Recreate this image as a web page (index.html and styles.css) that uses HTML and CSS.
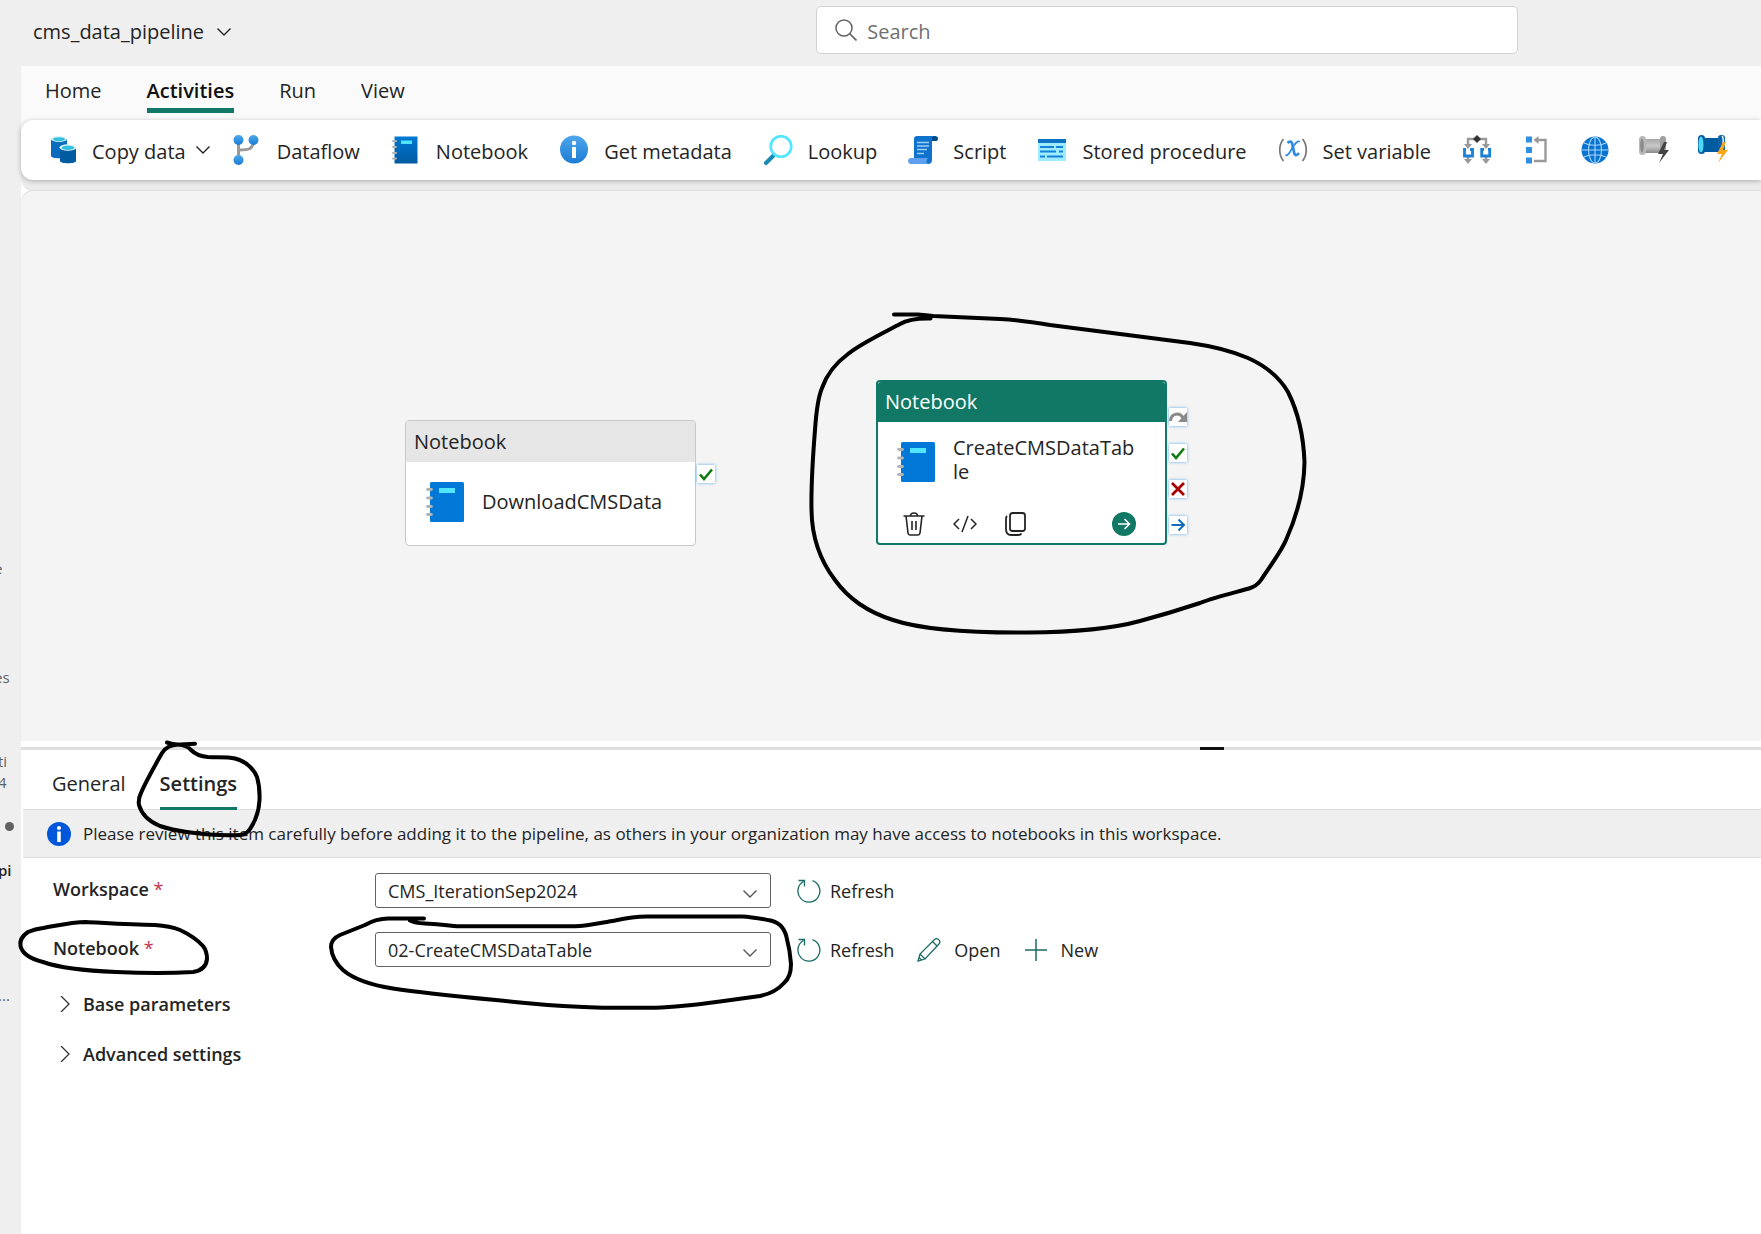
FILE: index.html
```html
<!DOCTYPE html>
<html lang="en">
<head>
<meta charset="utf-8">
<title>cms_data_pipeline</title>
<link rel="stylesheet" href="styles.css">
</head>
<body>
<svg class="defs" aria-hidden="true">
  <defs>
    <linearGradient id="blue-v" x1="0" y1="0" x2="0" y2="1"><stop offset="0" stop-color="#50a7ec"/><stop offset="1" stop-color="#1a7cd4"/></linearGradient>
    <linearGradient id="book-v" x1="0" y1="0" x2="0" y2="1"><stop offset="0" stop-color="#0078d4"/><stop offset="1" stop-color="#005ba1"/></linearGradient>
    <linearGradient id="grey-v" x1="0" y1="0" x2="0" y2="1"><stop offset="0" stop-color="#a8a8a8"/><stop offset=".5" stop-color="#c8c8c8"/><stop offset="1" stop-color="#8a8a8a"/></linearGradient>
  </defs>
  <symbol id="chev-down" viewBox="0 0 16 10"><path d="M1.500 1.500 8 8l6.500-6.500" fill="none" stroke="currentColor" stroke-width="1.400"/></symbol>
  <symbol id="book" viewBox="0 0 38 40"><rect x="4" width="34" height="40" rx="1.500" fill="#0078d7"/><rect x="13" y="6" width="16" height="5" fill="#50e6ff"/><path d="M1.500 7.500h4M1.500 16h4M1.500 24.500h4M1.500 32.500h4" stroke="#b4b4b4" stroke-width="2.800" stroke-linecap="round"/></symbol>
  <symbol id="refresh" viewBox="0 0 24 24"><path d="M6.500 2.500A11 11 0 1 0 15.500 1.700M1.500 1.500h6v6" fill="none" stroke="#1b6b62" stroke-width="1.300"/></symbol>
  <symbol id="check" viewBox="0 0 18 18"><path d="m3 9.500 4 4.500 8-9.500" fill="none" stroke="#107c10" stroke-width="2.600"/></symbol>
</svg>

<div class="app">
  <header class="topbar">
    <button class="title" type="button"><span>cms_data_pipeline</span><svg class="chev"><use href="#chev-down"/></svg></button>
    <label class="search">
      <svg viewBox="0 0 22 22"><circle cx="9" cy="9" r="8" fill="none" stroke="#616161" stroke-width="1.500"/><path d="m14.500 14.500 7 7" stroke="#616161" stroke-width="1.600"/></svg>
      <input type="text" placeholder="Search" aria-label="Search">
    </label>
  </header>

  <nav class="rail" aria-label="Workspaces">
    <span>e</span><span>es</span><span>ti<br>4</span><i class="dot"></i><span class="current">pi</span><span>...</span>
  </nav>

  <main class="main">
    <nav class="menu">
      <button type="button">Home</button>
      <button type="button" class="active">Activities</button>
      <button type="button">Run</button>
      <button type="button">View</button>
    </nav>

    <div class="toolbar">
      <button type="button" class="copy">
        <svg viewBox="0 0 30 30"><path d="M2 4v17c0 3 16 3 16 0V4z" fill="#0a6cbd"/><ellipse cx="10" cy="4" rx="8" ry="3" fill="#d5f3fb"/><ellipse cx="10" cy="4.200" rx="6" ry="2" fill="#32bedd"/><path d="M11 13v13c0 3 16 3 16 0V13z" fill="#005ba1"/><ellipse cx="19" cy="12.500" rx="8.500" ry="3.200" fill="#e8f6fb"/><ellipse cx="19" cy="12.800" rx="6.500" ry="2.200" fill="#32bedd"/></svg>
        <span>Copy data</span><svg class="chev"><use href="#chev-down"/></svg>
      </button>
      <button type="button">
        <svg viewBox="0 0 30 30"><path d="M6.500 5v20M21.500 5c0 10-6 10-14 10" fill="none" stroke="#999" stroke-width="3"/><circle cx="6.500" cy="5" r="5" fill="url(#blue-v)"/><circle cx="21.500" cy="5" r="5" fill="url(#blue-v)"/><circle cx="6.500" cy="25" r="5" fill="url(#blue-v)"/></svg>
        <span>Dataflow</span>
      </button>
      <button type="button">
        <svg viewBox="0 0 30 30"><path d="M3.500 1.500h23v27h-23z" fill="url(#book-v)"/><path d="M10 5.500h11v3.500H10z" fill="#50e6ff"/><path d="M2 6h3M2 12h3M2 18h3M2 23.500h3" stroke="#b4b4b4" stroke-width="2" stroke-linecap="round"/></svg>
        <span>Notebook</span>
      </button>
      <button type="button">
        <svg viewBox="0 0 30 30"><circle cx="15" cy="14.500" r="14" fill="url(#blue-v)"/><circle cx="15" cy="8" r="2.200" fill="#fff"/><path d="M13 12h4v11h-4z" fill="#fff"/></svg>
        <span>Get metadata</span>
      </button>
      <button type="button">
        <svg viewBox="0 0 30 30"><path d="m3 28 9-9" stroke="#198ab3" stroke-width="4" stroke-linecap="round"/><circle cx="18" cy="11.500" r="10.300" fill="#fff" stroke="#50e6ff" stroke-width="2.600"/></svg>
        <span>Lookup</span>
      </button>
      <button type="button">
        <svg viewBox="0 0 30 30"><path d="M9 1h17c4 0 5 5 1 5h-3v19c0 3-2 4-4 4H6V4c0-2 1-3 3-3z" fill="#0f73cd"/><path d="M24 6V3.500c0-3.300 6-3.300 6 .3 0 1.200-.8 2.200-2 2.200z" fill="#004c87"/><path d="M3 23h17c-2 3-2 5 0 6H3c-4 0-4-6 0-6z" fill="#5ea0ef"/><path d="M9 7.500h12M9 11h12M9 14.500h10M9 18.500h7" stroke="#9cd0f7" stroke-width="1.300"/></svg>
        <span>Script</span>
      </button>
      <button type="button">
        <svg viewBox="0 0 30 30"><path d="M1 4h28v22H1z" fill="#9cebff"/><path d="M1 4h28v4H1z" fill="#0f73c4"/><path d="M3 12h14M19 12h7M3 16.500h16M22 16.500h4M3 21.500h5M10 21.500h16" stroke="#1482d8" stroke-width="1.900"/></svg>
        <span>Stored procedure</span>
      </button>
      <button type="button">
        <svg viewBox="0 0 30 30"><path d="M5.500 4c-5 6-5 16 0 22M24.500 4c5 6 5 16 0 22" fill="none" stroke="#777" stroke-width="1.700"/><path d="M9.500 8c3-3 4.500-1 5 2l1.500 7c.7 4 2.500 4 5 1" fill="none" stroke="#2f8ae0" stroke-width="2.700"/><path d="M22 6.500c-3-1-5 2-7.500 6S10.500 21.500 7.500 20" fill="none" stroke="#2f8ae0" stroke-width="1.700"/></svg>
        <span>Set variable</span>
      </button>
      <div class="extras">
        <button type="button" aria-label="If condition"><svg viewBox="0 0 30 30"><path d="M6 11V4h18v7M6 20v6M24 20v6" fill="none" stroke="#999" stroke-width="2.400"/><path d="m2 9 4 5 4-5zM20 9l4 5 4-5zM2 24l4 5 4-5zM20 24l4 5 4-5z" fill="#999"/><path d="m15 0 4 4-4 4-4-4z" fill="#333"/><path d="M4 14.500H2.500v6.500h8v-6.500H8M22 14.500h-2.300v6.500h8v-6.500H26" fill="none" stroke="#1b80d8" stroke-width="2.800"/></svg></button>
        <button type="button" aria-label="ForEach"><svg viewBox="0 0 30 30"><path d="M5 1.500h6v6H5zM5 12h6v6H5zM5 22.500h6v6H5z" fill="#2f8fe0"/><path d="M17 5h7.500v21H13" fill="none" stroke="#999" stroke-width="2.400"/><path d="m12.500 5 5-4v8z" fill="#999"/></svg></button>
        <button type="button" aria-label="Web"><svg viewBox="0 0 30 30"><circle cx="15" cy="15" r="13.500" fill="#0a73d0"/><g fill="none" stroke="#a9d7fb" stroke-width="1.100"><ellipse cx="15" cy="15" rx="6.500" ry="13"/><path d="M15 2v26M2 15h26M4 8c6 3 16 3 22 0M4 22c6-3 16-3 22 0"/></g></svg></button>
        <button type="button" aria-label="Webhook"><svg viewBox="0 0 30 30"><path d="M4 4h20v14H4z" fill="url(#grey-v)"/><rect x="0" y="1" width="7" height="19" rx="3.500" fill="#b8b8b8"/><ellipse cx="3" cy="10.500" rx="1.800" ry="7" fill="#8b8b8b"/><rect x="21" y="1" width="6" height="18" rx="3" fill="#a0a0a0"/><path d="m25 7-6 12h5l-4 9 10-13h-5l3-8z" fill="#444"/></svg></button>
        <button type="button" aria-label="Invoke pipeline"><svg viewBox="0 0 30 30"><path d="M4 3h20v14H4z" fill="#005ba1"/><rect x="0" y="0" width="7" height="19" rx="3.500" fill="#005ba1"/><ellipse cx="3" cy="9.500" rx="2.500" ry="8" fill="#4fd8f4"/><rect x="20" y="0" width="7" height="18" rx="3" fill="#0a62a8"/><path d="M24 1c2 2 1 6 1 9" stroke="#eaf6fd" stroke-width="1.500" fill="none"/><path d="m25 7-6 12h5l-4 9 10-13h-5l3-8z" fill="#faa61a"/></svg></button>
      </div>
    </div>

    <section class="canvas" aria-label="Pipeline canvas">
      <article class="node download">
        <h2>Notebook</h2>
        <div class="node-body"><svg class="book"><use href="#book"/></svg><span>DownloadCMSData</span></div>
        <div class="ports"><i><svg><use href="#check"/></svg></i></div>
      </article>
      <article class="node create">
        <h2>Notebook</h2>
        <div class="node-body"><svg class="book"><use href="#book"/></svg><span>CreateCMSDataTable</span></div>
        <div class="actions">
          <button type="button" aria-label="Delete"><svg viewBox="0 0 24 24" fill="none" stroke="#242424" stroke-width="1.600"><path d="M1.500 4h21M4 4l2 17c.2 1.400 1 2 2 2h8c1 0 1.800-.6 2-2l2-17M8.500 4c0-4 7-4 7 0M10 9v9M14 9v9"/></svg></button>
          <button type="button" aria-label="View code"><svg viewBox="0 0 24 24" fill="none" stroke="#242424" stroke-width="1.500"><path d="m6 7-5 5 5 5M18 7l5 5-5 5M15 4 9 20"/></svg></button>
          <button type="button" aria-label="Clone"><svg viewBox="0 0 24 24" fill="none" stroke="#242424" stroke-width="1.800"><rect x="6" y="1" width="15" height="18" rx="2.500"/><path d="M3 4c-1 1-1 2-1 3v10c0 4 2 6 5 6h7c2 0 3-.5 3.500-1.500"/></svg></button>
          <button type="button" aria-label="Add next" class="next"><svg viewBox="0 0 24 24"><circle cx="12" cy="12" r="12" fill="#117865"/><path d="M6 12h11M12.500 7l5 5-5 5" fill="none" stroke="#fff" stroke-width="1.600"/></svg></button>
        </div>
        <div class="ports">
          <i><svg viewBox="0 0 18 18"><path d="M1.500 13C2 5 11 4 14 10" fill="none" stroke="#8a8a8a" stroke-width="3"/><path d="M18 4v10H9z" fill="#8a8a8a"/></svg></i>
          <i><svg><use href="#check"/></svg></i>
          <i><svg viewBox="0 0 18 18"><path d="m3 3 12 12M15 3 3 15" stroke="#a80000" stroke-width="2.800"/></svg></i>
          <i><svg viewBox="0 0 18 18"><path d="M2.500 9h12M9.500 3.500 15 9l-5.500 5.500" fill="none" stroke="#0f6cbd" stroke-width="2"/></svg></i>
        </div>
      </article>
      <svg class="ink ink-node" viewBox="790 290 540 360"><path d="M894 314.500H918Q926 315 933 316L1000 319Q1020 320 1050 325L1190 343Q1225 348 1248 358Q1275 370 1288 392Q1303 422 1304.500 462Q1304 500 1286 540C1281 552 1268 569 1261 580Q1257 586 1249 588.500C1237 592 1215 597 1200 603Q1170 613 1140 621Q1100 632 1028 632.500C960 633 920 629 893 620Q855 608 835 580Q812 550 811.500 510C811 485 813 455 815 430Q817 400 822 388Q829 368 848 354C860 344 885 332 900 324Q910 318 930.500 318.500"/></svg>
    </section>

    <div class="splitter"><i></i></div>

    <section class="panel">
      <nav class="tabs">
        <button type="button">General</button>
        <button type="button" class="active">Settings</button>
        <svg class="ink ink-tab" viewBox="130 735 140 110"><path d="M167 742.500Q174 745 180 744.500L195 743.700M178 744.500Q187 745 191 750C196 755 202 756.500 208 757C218 757.500 227 756.500 235 758.500Q251 763 257 777Q260 787 259.500 800C259 812 256 820 250 829Q246 835 240 835C222 836 205 834.500 187 832Q172 830 160 826Q143 819 139 805Q138 799 141 793C146 781 157 762 162 753Q167 745 178 744.500"/></svg>
      </nav>
      <p class="notice">
        <svg viewBox="0 0 24 24"><circle cx="12" cy="12" r="12" fill="#0057d9"/><circle cx="12" cy="6" r="2" fill="#fff"/><path d="M10.200 9.500h3.600V20h-3.600z" fill="#fff"/></svg>
        <span>Please review this item carefully before adding it to the pipeline, as others in your organization may have access to notebooks in this workspace.</span>
      </p>
      <form class="form">
        <div class="row">
          <label for="workspace">Workspace <b>*</b></label>
          <div class="select"><select id="workspace"><option>CMS_IterationSep2024</option></select><svg class="chev"><use href="#chev-down"/></svg></div>
          <button type="button"><svg><use href="#refresh"/></svg>Refresh</button>
        </div>
        <div class="row">
          <label for="notebook">Notebook <b>*</b></label>
          <div class="select"><select id="notebook"><option>02-CreateCMSDataTable</option></select><svg class="chev"><use href="#chev-down"/></svg></div>
          <button type="button"><svg><use href="#refresh"/></svg>Refresh</button>
          <button type="button" class="wide"><svg viewBox="0 0 24 24"><path d="m1 23 2-7L17.500 1.500c3-2.500 7 2 4.500 4.500L8 21zM3 16l5 5M15.500 3.500l5 5M2 19.500 4.500 22" fill="none" stroke="#1b6b62" stroke-width="1.300"/></svg>Open</button>
          <button type="button" class="wide"><svg viewBox="0 0 24 24"><path d="M12 1v22M1 12h22" stroke="#1b6b62" stroke-width="1.500"/></svg>New</button>
          <svg class="ink ink-label" viewBox="15 915 200 65"><path d="M20.500 946Q19 938 28 932Q35 929 43 928C55 926 72 922 86 922C105 923 130 925 155 925Q170 926 180 930Q195 937 203 946Q207 951 207 959Q206 970 193 972Q160 974 116 972C90 971 60 968 43 962Q23 957 20.500 946"/></svg>
          <svg class="ink ink-select" viewBox="325 910 475 105"><path d="M424 918.500H390Q377 918 365 925L340 935Q331 939 331 947Q332 960 343 970Q358 983 393 988.500C430 994 475 998 520 1002.500Q565 1007 603 1007.700H655Q680 1007 720 1001.500L760 996Q775 993 784 983Q791 977 791 964Q790 950 786.500 937Q783 922 768 920C757 918 752 917 742 916.500H650Q635 916 615 920.500C600 923 588 926 575 926.300H457C445 925 440 924 425 923.500Q415 923 410 920.500"/></svg>
        </div>
        <details><summary><svg viewBox="0 0 10 16"><path d="m1 0 8 8-8 8" fill="none" stroke="#333" stroke-width="1.300"/></svg>Base parameters</summary></details>
        <details><summary><svg viewBox="0 0 10 16"><path d="m1 0 8 8-8 8" fill="none" stroke="#333" stroke-width="1.300"/></svg>Advanced settings</summary></details>
      </form>
    </section>
  </main>
</div>
</body>
</html>
```
FILE: styles.css
```css
* { box-sizing: border-box; }
body {
  margin: 0;
  background: #efefef;
  color: #242424;
  font-family: "Open Sans", "Noto Sans", sans-serif;
  font-size: 20px;
  line-height: 24px;
}
button, input, select { font: inherit; color: inherit; }
button { border: 0; padding: 0; background: none; white-space: nowrap; }
svg { display: block; flex: none; }
.defs { position: absolute; width: 0; height: 0; }
.chev { width: 16px; height: 10px; }

.app {
  display: grid;
  grid-template: auto 1fr / 21px minmax(0, 1fr);
  min-height: 100vh;
  overflow: hidden;
}

.topbar {
  grid-column: 1 / -1;
  display: grid;
  grid-template-columns: 46.35% 39.85%;
  align-items: center;
  height: 66px;
  padding-bottom: 6px;
}
.title { display: flex; align-items: center; gap: 12px; padding: 3px 0 0 33px; }
.search {
  display: flex;
  align-items: center;
  gap: 10px;
  height: 48px;
  padding: 0 18px;
  border: 1px solid #d1d1d1;
  border-radius: 5px;
  background: #fff;
}
.search svg { width: 22px; height: 22px; }
.search input { flex: 1; border: 0; padding: 3px 0 0; outline: 0; background: none; }
.search input::placeholder { color: #707070; opacity: 1; }

.rail {
  display: flex;
  flex-direction: column;
  padding-top: 492px;
  color: #616161;
  font-size: 15px;
  line-height: 21px;
}
.rail span { margin: 0 0 88px -2px; }
.rail span:nth-of-type(-n+2) { margin-left: -6px; }
.rail span:nth-of-type(2) { margin-bottom: 63px; }
.rail span:nth-of-type(3) { margin-bottom: 29px; }
.rail .dot { align-self: flex-end; width: 9px; height: 9px; margin: 0 7px 29px 0; border-radius: 50%; background: #616161; }
.rail .current { margin-bottom: 104px; color: #242424; font-weight: 600; }

.main { display: flex; flex-direction: column; background: #fff; }
.menu {
  display: flex;
  gap: 45px;
  height: 66px;
  margin-bottom: -12px;
  padding: 8px 24px 0;
  background: #fafafa;
}
.menu button { height: 39px; border-bottom: 5px solid transparent; }
.menu .active { border-color: #117865; color: #111; font-weight: 600; }

.toolbar {
  position: relative;
  display: flex;
  align-items: center;
  gap: 31px;
  height: 60px;
  padding-left: 28px;
  border-radius: 12px 0 0 12px;
  background: #fff;
  box-shadow: 0 1px 5px rgba(0, 0, 0, .28), 0 11px 0 #ebebeb;
}
.toolbar button { display: flex; align-items: center; gap: 15px; }
.toolbar span { padding-top: 3px; }
.toolbar svg { width: 30px; height: 30px; }
.toolbar .chev { width: 16px; height: 10px; margin-left: -4px; }
.toolbar .copy { gap: 13px; margin-right: -10px; }
.extras { display: flex; gap: 29px; }

.canvas {
  position: relative;
  height: 550px;
  margin-top: 11px;
  border-radius: 12px 0 0 0;
  background: #f4f4f4;
  box-shadow: 0 -1px 1px #dedede;
}
.node {
  position: absolute;
  width: 291px;
  border: 1px solid #c8c8c8;
  border-radius: 4px;
  background: #fff;
}
.node h2 {
  height: 41px;
  margin: 0;
  padding: 9px 8px;
  border-radius: 3px 3px 0 0;
  background: #e6e6e6;
  font-size: 20px;
  font-weight: 400;
}
.node-body { display: flex; align-items: center; gap: 18px; height: 80px; padding: 0 28px 0 20px; }
.node-body span { overflow-wrap: anywhere; }
.book { width: 38px; height: 40px; }
.download { left: 384px; top: 229px; height: 126px; }
.create { left: 855px; top: 189px; height: 165px; border: 2px solid #117865; }
.create h2 { height: 40px; padding: 8px 7px; background: #117865; color: #fff; font-weight: 500; }
.create .node-body { padding-left: 19px; }
.create .node-body span { padding-bottom: 4px; }
.actions { display: flex; gap: 27px; padding: 10px 29px 0 24px; }
.actions svg { width: 24px; height: 24px; }
.actions .next { margin-left: auto; }
.ports { position: absolute; left: 100%; top: 44px; display: grid; gap: 18px; padding-left: 2px; }
.create .ports { top: 26px; padding-left: 4px; }
.ports i { width: 18px; height: 18px; background: #fff; box-shadow: 0 0 3px #5aa9ec; }
.ports svg { width: 18px; height: 18px; }

.ink {
  position: absolute;
  z-index: 2;
  fill: none;
  stroke: #000;
  stroke-width: 4px;
  stroke-linecap: round;
  stroke-linejoin: round;
  pointer-events: none;
}
.ink-node { left: 769px; top: 99px; width: 540px; height: 360px; }
.ink-tab { left: 109px; top: -15px; width: 140px; height: 110px; }
.ink-label { left: -6px; top: -17px; width: 200px; height: 65px; }
.ink-select { left: 304px; top: -22px; width: 475px; height: 105px; }

.splitter { height: 3px; margin-top: 6px; padding-left: 67.75%; background: #dedede; }
.splitter i { display: block; width: 24px; height: 3px; background: #111; }

.tabs { position: relative; display: flex; gap: 34px; height: 60px; padding-left: 31px; }
.tabs button { height: 60px; padding-top: 11px; border-bottom: 3px solid transparent; }
.tabs .active { border-color: #117865; font-weight: 600; }
.notice {
  display: flex;
  align-items: center;
  gap: 12px;
  height: 49px;
  margin: -1px 0 0 2px;
  padding-left: 24px;
  border: solid #dedede;
  border-width: 1px 0;
  background: #efefef;
  font-size: 17px;
  white-space: nowrap;
}
.notice svg { width: 24px; height: 24px; }

.form { display: grid; gap: 24px; padding-top: 15px; font-size: 18px; }
.row { position: relative; display: flex; align-items: center; height: 35px; padding-left: 32px; }
.row label { width: 322px; padding-bottom: 3px; font-weight: 600; }
.row b { color: #c4314b; font-weight: 400; }
.select { position: relative; width: 396px; margin-right: 26px; }
.select select {
  width: 100%;
  height: 35px;
  padding: 1px 40px 0 12px;
  border: 1px solid #616161;
  border-radius: 3px;
  background: #fff;
  appearance: none;
}
.select .chev { position: absolute; right: 13px; top: 16px; color: #555; }
.row button { display: flex; align-items: center; gap: 9px; margin-right: 23px; }
.row .wide { gap: 13px; }
.row button svg { width: 24px; height: 24px; }
.form summary { display: flex; align-items: center; gap: 13px; height: 26px; padding-left: 39px; font-weight: 600; list-style: none; }
.form summary svg { width: 10px; height: 16px; }
```
